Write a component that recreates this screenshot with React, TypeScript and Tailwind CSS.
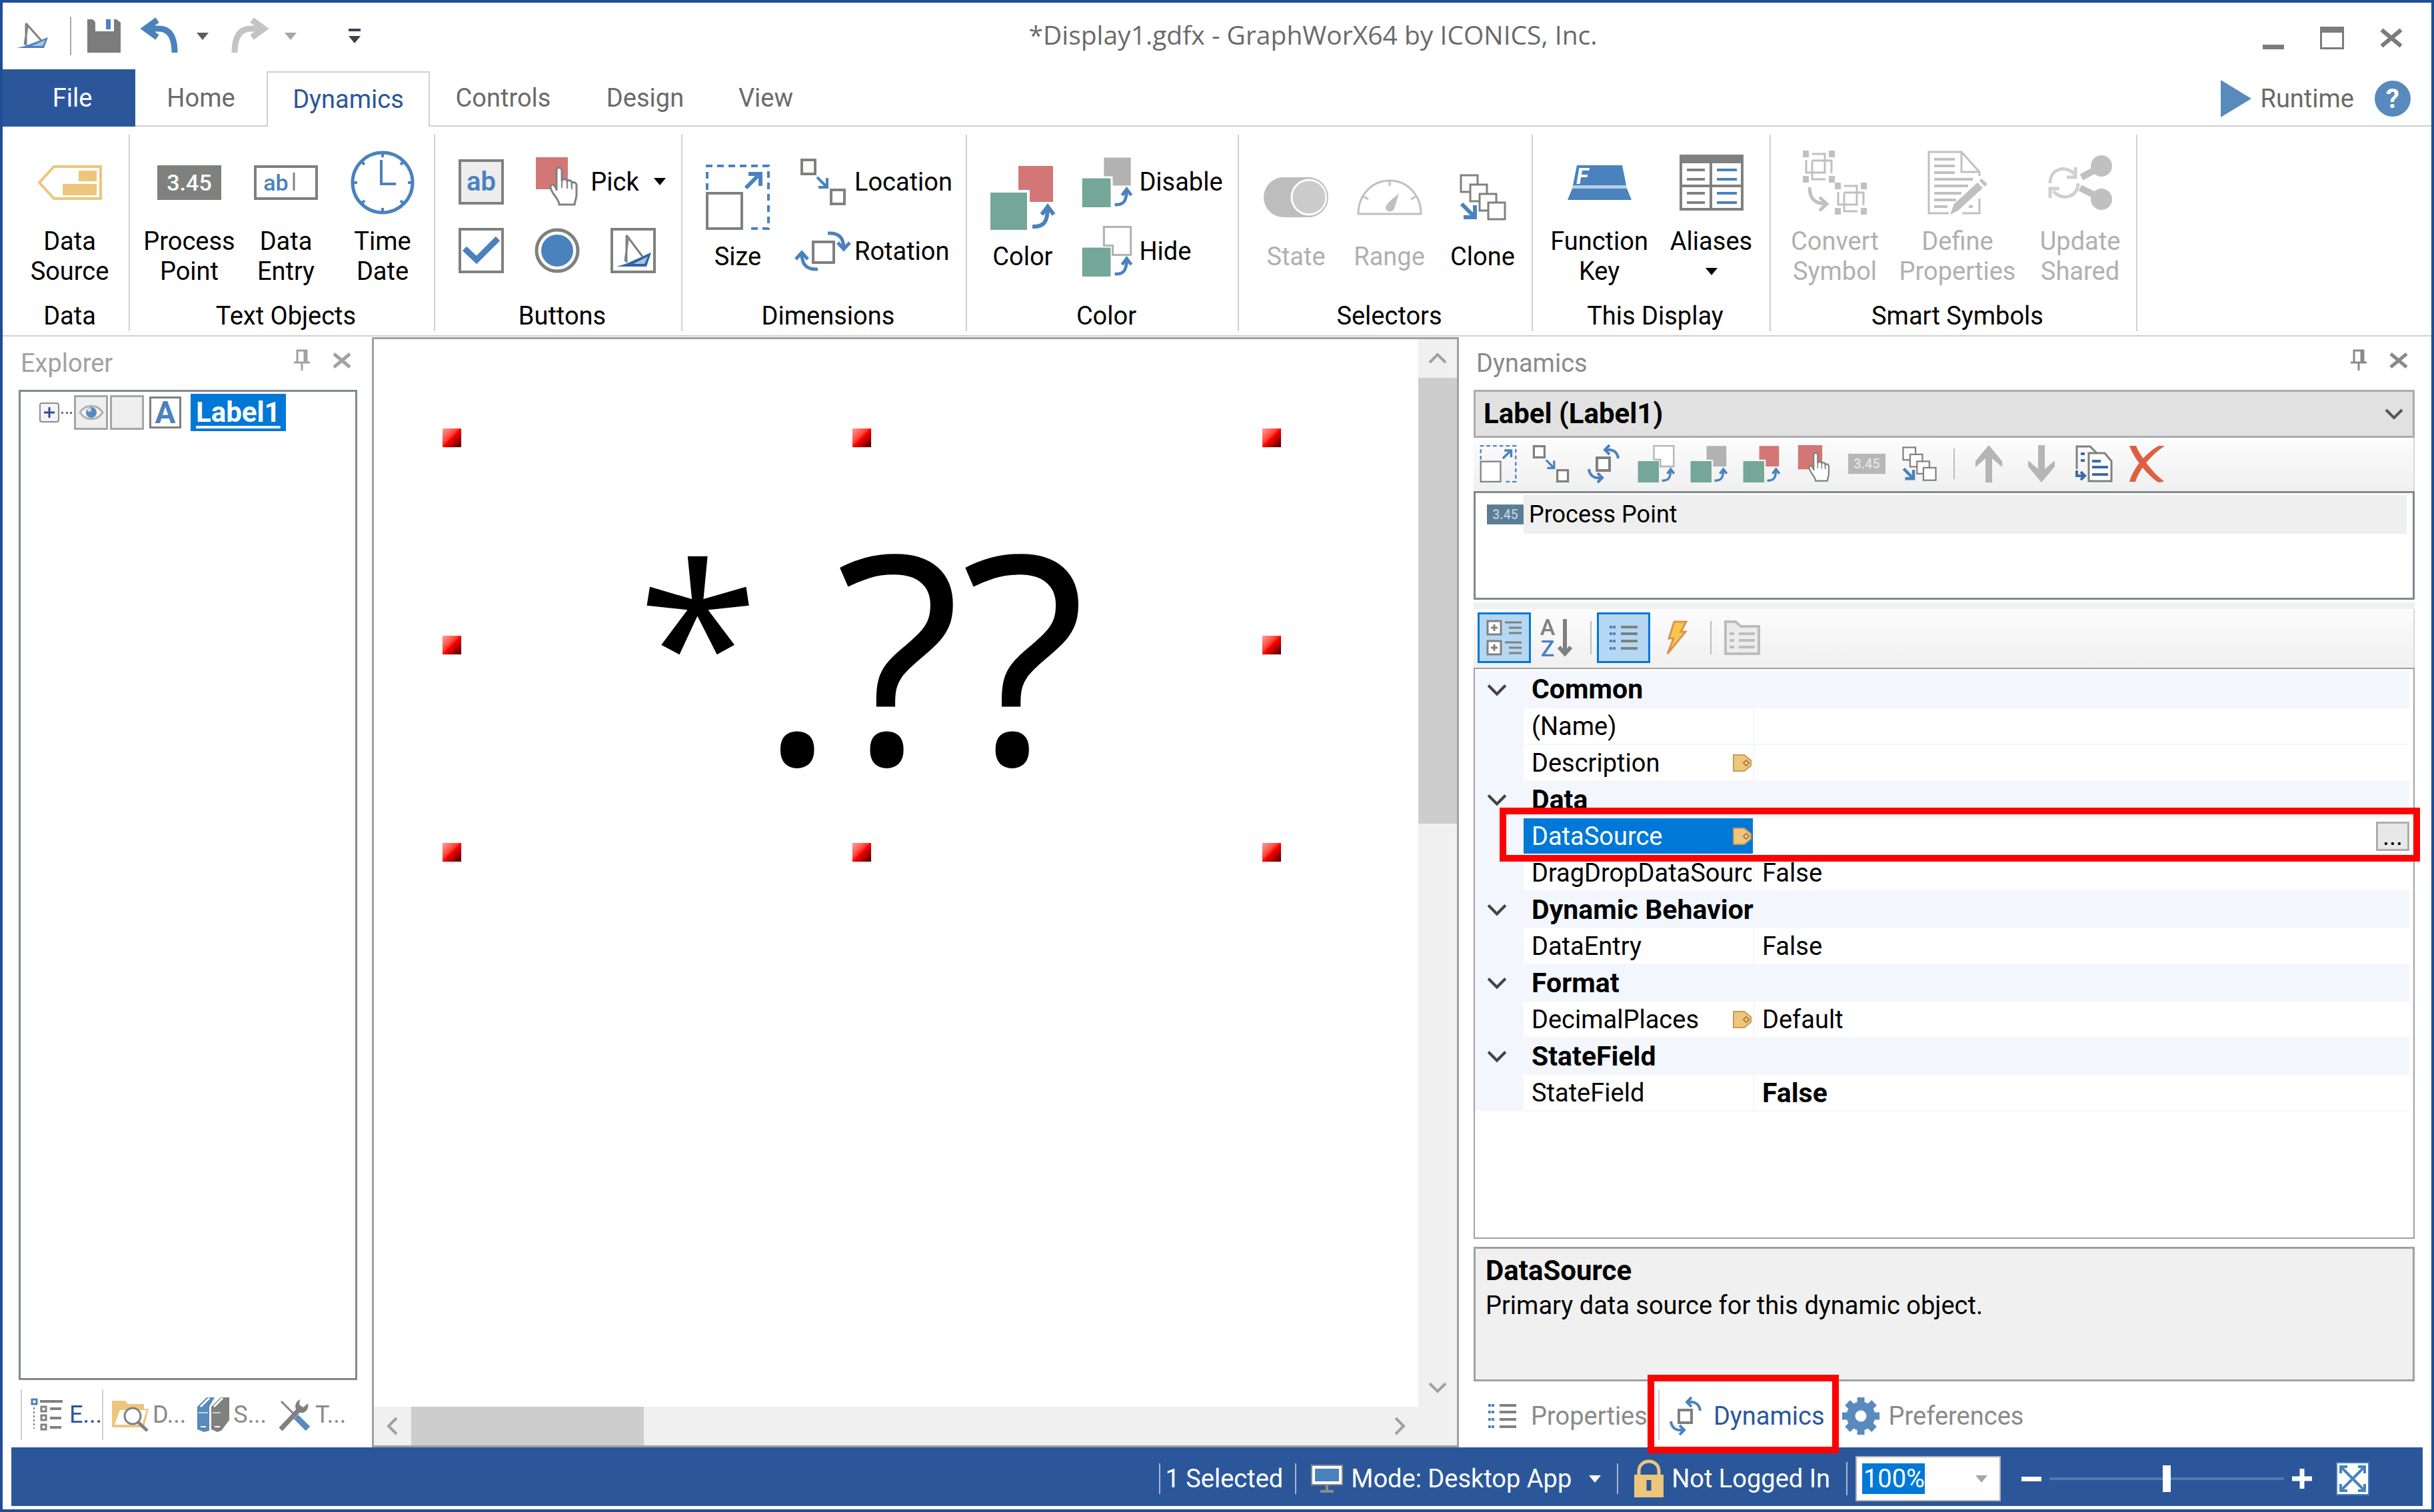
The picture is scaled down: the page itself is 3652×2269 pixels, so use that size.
import React from 'react';

const BLUE = '#4a82bd';
const GRAY = '#7f817f';
const GREEN = '#74a797';
const RED = '#d27676';
const MUTED = '#c0c0c0';

interface IconProps {
  readonly className?: string;
}

interface SvgProps extends IconProps {
  readonly box: string;
  readonly children: React.ReactNode;
}

function Svg({ box, className, children }: SvgProps) {
  return (
    <svg viewBox={box} className={`shrink-0 overflow-visible ${className ?? ''}`} fill="none" aria-hidden="true">
      {children}
    </svg>
  );
}

/* ---------- small glyphs ---------- */

function Caret({ className = 'w-[18px] h-[11px] text-black' }: IconProps) {
  return (
    <Svg box="0 0 18 11" className={className}>
      <path d="M0 0H18L9 11Z" fill="currentColor" />
    </Svg>
  );
}

function Chevron({ className = '' }: IconProps) {
  return (
    <Svg box="0 0 28 18" className={className}>
      <path d="M2 3L14 15L26 3" stroke="currentColor" strokeWidth="4" />
    </Svg>
  );
}

function PinIcon() {
  return (
    <Svg box="0 0 24 32" className="w-[24px] h-[32px]">
      <path d="M5 2H19V20H5ZM16 2V20M0 20H24M12 20V32" stroke="currentColor" strokeWidth="3" />
    </Svg>
  );
}

function CloseIcon({ className = 'w-[28px] h-[22px]' }: IconProps) {
  return (
    <Svg box="0 0 28 22" className={className}>
      <path d="M2 1L26 21M26 1L2 21" stroke="currentColor" strokeWidth="5" />
    </Svg>
  );
}

function SailIcon({ className = 'w-[48px] h-[42px]' }: IconProps) {
  return (
    <Svg box="0 0 48 42" className={className}>
      <path d="M0 39C12 37 26 31 47 23L41 39Z" fill={BLUE} />
      <path d="M22 36L43 27L39 36Z" fill="#a9c4e0" />
      <path d="M14 2V35M14 2L37 28M16 7L12 34" stroke={GRAY} strokeWidth="3" />
    </Svg>
  );
}

function SaveIcon() {
  return (
    <Svg box="0 0 50 50" className="w-[50px] h-[50px]">
      <path d="M0 0H8L12 4V18H40V0H44L50 5V50H0Z" fill="#7c7c7c" />
      <rect x="28" y="0" width="7" height="15" fill={BLUE} />
    </Svg>
  );
}

function UndoIcon({ className }: IconProps) {
  return (
    <Svg box="0 0 54 50" className={className}>
      <path d="M22 1L4 14L22 27M4 14H24C40 14 48 26 48 50" stroke="currentColor" strokeWidth="9" />
    </Svg>
  );
}

function HelpIcon() {
  return (
    <Svg box="0 0 56 56" className="w-[56px] h-[56px]">
      <circle cx="28" cy="28" r="27" fill="#588abd" />
      <text x="28" y="42" textAnchor="middle" fontSize="40" fontWeight="700" fill="#fff">?</text>
    </Svg>
  );
}

/* ---------- ribbon icons ---------- */

function TagIcon() {
  return (
    <Svg box="0 0 96 52" className="w-[96px] h-[52px]">
      <path d="M24 2H94V50H24L2 26Z" stroke="#edc67c" strokeWidth="4" />
      <path d="M61 8H88V24H61ZM37 28H88V45H37Z" fill="#edc67c" />
    </Svg>
  );
}

interface ValueIconProps extends IconProps {
  readonly fill?: string;
  readonly ink?: string;
}

function ValueIcon({ className = 'w-[96px] h-[52px]', fill = GRAY, ink = '#fff' }: ValueIconProps) {
  return (
    <Svg box="0 0 96 52" className={className}>
      <rect width="96" height="52" fill={fill} />
      <text x="48" y="38" textAnchor="middle" fontSize="34" fontWeight="500" fill={ink}>3.45</text>
    </Svg>
  );
}

function EntryIcon() {
  return (
    <Svg box="0 0 96 52" className="w-[96px] h-[52px]">
      <rect x="2" y="2" width="92" height="48" fill="#fff" stroke={GRAY} strokeWidth="4" />
      <text x="33" y="38" textAnchor="middle" fontSize="34" fontWeight="500" fill={BLUE}>ab</text>
      <path d="M60 11V38" stroke={GRAY} strokeWidth="3" />
    </Svg>
  );
}

function ClockIcon() {
  return (
    <Svg box="0 0 96 96" className="w-[96px] h-[96px]">
      <circle cx="48" cy="48" r="45" stroke={BLUE} strokeWidth="5" />
      <path d="M46 14V50H68" stroke={BLUE} strokeWidth="4" />
      <path d="M48 3V10M48 86V93M3 48H10M86 48H93M16 16L21 21M75 21L80 16M16 80L21 75M75 75L80 80" stroke={BLUE} strokeWidth="4" />
    </Svg>
  );
}

function PushIcon() {
  return (
    <Svg box="0 0 68 68" className="w-[68px] h-[68px]">
      <rect x="2" y="2" width="64" height="64" fill="#ededed" stroke={GRAY} strokeWidth="4" />
      <text x="34" y="47" textAnchor="middle" fontSize="40" fontWeight="600" fill={BLUE}>ab</text>
    </Svg>
  );
}

function PickIcon({ className = 'w-[64px] h-[74px]' }: IconProps) {
  return (
    <Svg box="0 0 64 74" className={className}>
      <rect width="48" height="48" fill={RED} />
      <path
        d="M31 50V20C31 14 39 14 39 20V36C40 31 47 32 47 37C48 33 54 34 54 39C56 36 61 38 61 42V56C61 62 59 64 58 71H35C35 62 22 54 22 44C22 39 28 40 31 48"
        fill="#fff"
        stroke={GRAY}
        strokeWidth="3"
      />
      <path d="M39 35V46M47 37V47M54 39V48" stroke={GRAY} strokeWidth="2" />
    </Svg>
  );
}

function CheckIcon() {
  return (
    <Svg box="0 0 68 68" className="w-[68px] h-[68px]">
      <rect x="2" y="2" width="64" height="64" fill="#fff" stroke={GRAY} strokeWidth="4" />
      <path d="M9 31L27 48L59 16" stroke={BLUE} strokeWidth="9" />
    </Svg>
  );
}

function RadioIcon() {
  return (
    <Svg box="0 0 68 68" className="w-[68px] h-[68px]">
      <circle cx="34" cy="34" r="31" fill="#fff" stroke={GRAY} strokeWidth="5" />
      <circle cx="34" cy="34" r="24" fill={BLUE} />
    </Svg>
  );
}

function SailButtonIcon() {
  return (
    <Svg box="0 0 68 68" className="w-[68px] h-[68px]">
      <rect x="2" y="2" width="64" height="64" fill="#fff" stroke={GRAY} strokeWidth="4" />
      <path d="M9 58C24 55 40 46 61 37L54 58Z" fill="#2f63a8" />
      <path d="M34 54L56 43L51 54Z" fill="#a9c4e0" />
      <path d="M24 11V52M24 11L48 43M26 17L22 50" stroke={GRAY} strokeWidth="3" />
    </Svg>
  );
}

function SizeIcon({ className = 'w-[96px] h-[98px]' }: IconProps) {
  return (
    <Svg box="0 0 96 98" className={className}>
      <path d="M2 38V2H94V96H62" stroke={BLUE} strokeWidth="4" strokeDasharray="10 7" />
      <rect x="2" y="43" width="52" height="53" fill="#fff" stroke={GRAY} strokeWidth="4" />
      <path d="M60 35L78 17M64 14H82V32" stroke={BLUE} strokeWidth="6" />
    </Svg>
  );
}

function LocationIcon({ className = 'w-[68px] h-[70px]' }: IconProps) {
  return (
    <Svg box="0 0 68 70" className={className}>
      <path d="M2 2H22V23H2ZM46 47H66V68H46Z" fill="#fff" stroke={GRAY} strokeWidth="4" />
      <path d="M25 28L38 41M40 29V43H27" stroke={BLUE} strokeWidth="4" />
    </Svg>
  );
}

function RotationIcon({ className = 'w-[84px] h-[60px]' }: IconProps) {
  return (
    <Svg box="0 0 84 60" className={className}>
      <rect x="27" y="16" width="31" height="31" fill="#fff" stroke={GRAY} strokeWidth="4" />
      <path d="M49 3C66 2 73 10 73 26M64 17L73 27L82 17" stroke={BLUE} strokeWidth="5" />
      <path d="M34 57C17 58 10 50 10 33M1 42L10 32L19 42" stroke={BLUE} strokeWidth="5" />
    </Svg>
  );
}

// Same rotation glyph as in the toolbars and the tab strip
function RotateIcon({ className = 'w-[56px] h-[56px]' }: IconProps) {
  return (
    <Svg box="0 0 56 56" className={className}>
      <rect x="18" y="19" width="19" height="19" fill="#fff" stroke={GRAY} strokeWidth="4" />
      <path d="M30 7C44 5 49 12 50 20M37 0L30 7L37 14" stroke={BLUE} strokeWidth="4" />
      <path d="M26 49C12 51 7 44 6 36M19 42L26 49L19 56" stroke={BLUE} strokeWidth="4" />
    </Svg>
  );
}

interface SwapIconProps extends IconProps {
  readonly fill: string;
  readonly line?: string;
}

function SwapIcon({ fill, line = 'none', className = 'w-[96px] h-[98px]' }: SwapIconProps) {
  return (
    <Svg box="0 0 96 98" className={className}>
      <path d="M42 2H94V56H59V38H42Z" fill={fill} stroke={line} strokeWidth="4" />
      <rect x="0" y="42" width="55" height="56" fill={GREEN} />
      <path d="M63 93C80 94 86 86 86 64M77 75L86 63L95 75" stroke={BLUE} strokeWidth="6" />
    </Svg>
  );
}

function StateIcon() {
  return (
    <Svg box="0 0 98 60" className="w-[98px] h-[60px]">
      <rect width="96" height="60" rx="30" fill="#bdbdbd" />
      <circle cx="68" cy="30" r="26" fill="#cbcbcb" stroke="#fff" strokeWidth="3" />
      <circle cx="67" cy="30" r="29" stroke="#bdbdbd" strokeWidth="2" />
    </Svg>
  );
}

function RangeIcon() {
  return (
    <Svg box="0 0 98 54" className="w-[98px] h-[54px]">
      <path d="M2 52C2 24 22 2 49 2C76 2 96 24 96 52Z" stroke={MUTED} strokeWidth="3" />
      <path d="M49 2V10M10 26L17 30M88 26L81 30" stroke={MUTED} strokeWidth="3" />
      <path d="M63 21L56 44C54 50 44 50 43 43C43 38 50 32 63 21Z" fill={MUTED} />
    </Svg>
  );
}

function CloneIcon({ className = 'w-[70px] h-[70px]' }: IconProps) {
  return (
    <Svg box="0 0 70 70" className={className}>
      <path d="M2 2H27V27H2Z" fill="#fff" stroke={GRAY} strokeWidth="3" />
      <path d="M16 16H41V41H16Z" fill="#fff" stroke={GRAY} strokeWidth="3" />
      <path d="M30 30H55V55H30Z" fill="#fff" stroke={GRAY} strokeWidth="3" />
      <path d="M43 43H68V68H43Z" fill="#fff" stroke={GRAY} strokeWidth="3" />
      <path d="M3 45L20 62M23 47V65H6" stroke={BLUE} strokeWidth="6" />
    </Svg>
  );
}

function FunctionKeyIcon() {
  return (
    <Svg box="0 0 96 52" className="w-[96px] h-[52px]">
      <path d="M14 0H82L88 30H8ZM7 35H89L96 52H0Z" fill={BLUE} />
      <path d="M8 30H88L89 35H7Z" fill="#b5cce4" />
      <text x="13" y="28" fontSize="34" fontWeight="700" fontStyle="italic" fill="#fff">F</text>
    </Svg>
  );
}

function AliasesIcon() {
  return (
    <Svg box="0 0 96 84" className="w-[96px] h-[84px]">
      <rect x="2" y="2" width="92" height="80" fill="#fff" stroke={GRAY} strokeWidth="4" />
      <path d="M0 7H96" stroke={GRAY} strokeWidth="12" />
      <path d="M47 12V82M0 47H96" stroke={GRAY} strokeWidth="4" />
      <path d="M11 23H38M11 37H38M11 58H38M11 72H38" stroke={GRAY} strokeWidth="4" />
      <path d="M56 23H86M56 37H86M56 58H86M56 72H86" stroke={BLUE} strokeWidth="4" />
    </Svg>
  );
}

function ConvertIcon() {
  const symbol = (
    <>
      <path d="M0 0H9V10H0ZM39 0H48V10H39ZM0 38H9V48H0ZM39 38H48V48H39Z" fill={MUTED} />
      <path d="M14 5H33V33H5V14M14 15H43V34M14 15V43H34" stroke={MUTED} strokeWidth="3" />
    </>
  );
  return (
    <Svg box="0 0 96 96" className="w-[96px] h-[96px]">
      {symbol}
      <g transform="translate(48 48)">{symbol}</g>
      <path d="M10 55C10 72 18 80 35 80M25 70L36 80L25 90" stroke={MUTED} strokeWidth="5" />
    </Svg>
  );
}

function DefineIcon() {
  return (
    <Svg box="0 0 90 96" className="w-[90px] h-[96px]">
      <path d="M32 94H2V2H51L78 32V38M51 2V32H78M52 94H78V72" stroke={MUTED} strokeWidth="3" />
      <path d="M10 13H41M10 23H41M10 33H41M10 43H68M10 53H61M10 64H51M10 74H43M10 84H30M62 84H68" stroke={MUTED} strokeWidth="4" />
      <path d="M34 96L40 80L75 48L83 56L46 90Z" fill={MUTED} />
      <path d="M78 45L81 42L90 50L86 54Z" fill={MUTED} />
    </Svg>
  );
}

function UpdateIcon() {
  return (
    <Svg box="0 0 96 82" className="w-[96px] h-[82px]">
      <circle cx="80" cy="16" r="16" fill={MUTED} />
      <circle cx="80" cy="66" r="16" fill={MUTED} />
      <path d="M50 33L74 20M48 49L74 62" stroke={MUTED} strokeWidth="10" />
      <path d="M3 42C3 20 26 14 39 28M41 18V33H28M45 42C45 62 22 70 8 54M3 64V50H17" stroke="#d0d0d0" strokeWidth="5" />
    </Svg>
  );
}

/* ---------- panel icons ---------- */

function ArrowIcon({ className }: IconProps) {
  return (
    <Svg box="0 0 56 56" className={className}>
      <path d="M28 0L48 24V33L33 20V56H23V20L8 33V24Z" fill="#b5b5b5" />
    </Svg>
  );
}

function CopyIcon() {
  return (
    <Svg box="0 0 56 56" className="w-[56px] h-[56px]">
      <path d="M2 36V2H22L32 12" stroke={GRAY} strokeWidth="3" />
      <path d="M20 54V12H44L54 24V54Z" fill="#fff" stroke={GRAY} strokeWidth="3" />
      <path d="M25 24H38M25 33H49M25 44H49M8 13H14M8 23H14M2 38V46H12M8 40L14 46L8 52" stroke="#3a6ca5" strokeWidth="4" />
    </Svg>
  );
}

function DeleteIcon() {
  return (
    <Svg box="0 0 56 56" className="w-[56px] h-[56px]">
      <path d="M2 1H12C16 12 36 42 54 54C50 56 46 56 44 55C26 42 8 18 2 1Z" fill="#dc6141" />
      <path d="M55 1C36 14 18 34 11 55H2C8 34 26 12 46 1Z" fill="#dc6141" />
    </Svg>
  );
}

function CategorizedIcon() {
  return (
    <Svg box="0 0 56 56" className="w-[56px] h-[56px]">
      <path d="M3 3H23V23H3ZM3 33H23V53H3Z" fill="#fff" stroke={GRAY} strokeWidth="3" />
      <path d="M13 8V18M8 13H18M13 38V48M8 43H18" stroke={GRAY} strokeWidth="3" />
      <path d="M29 5H54M35 13H54M35 21H54M29 35H54M35 43H54M35 51H54" stroke={GRAY} strokeWidth="3" />
    </Svg>
  );
}

function SortIcon() {
  return (
    <Svg box="0 0 50 56" className="w-[50px] h-[56px]">
      <text x="12" y="24" textAnchor="middle" fontSize="34" fontWeight="500" fill={GRAY}>A</text>
      <text x="12" y="56" textAnchor="middle" fontSize="34" fontWeight="500" fill={BLUE}>Z</text>
      <path d="M38 0V52M29 42L38 52L47 42" stroke={GRAY} strokeWidth="6" />
    </Svg>
  );
}

function ListIcon() {
  return (
    <Svg box="0 0 42 36" className="w-[42px] h-[36px]">
      <path d="M0 2H10M0 12H10M0 23H10M0 34H10" stroke={BLUE} strokeWidth="4" strokeDasharray="4 1" />
      <path d="M17 2H42M17 12H42M17 23H42M17 34H42" stroke={GRAY} strokeWidth="4" />
    </Svg>
  );
}

function BoltIcon() {
  return (
    <Svg box="0 0 32 52" className="w-[32px] h-[52px]">
      <path d="M12 2H30L22 17H29L2 50L11 27H4Z" fill="#fbc64f" stroke="#d9964e" strokeWidth="3" />
    </Svg>
  );
}

function PagesIcon() {
  return (
    <Svg box="0 0 54 52" className="w-[54px] h-[52px]">
      <path d="M2 50V2H17L25 9H52V50Z" fill="#ececec" stroke="#bdbdbd" strokeWidth="4" />
      <path d="M8 20H15M8 30H15M8 40H15M22 20H46M22 30H46M22 40H46" stroke="#bdbdbd" strokeWidth="4" />
    </Svg>
  );
}

function GearIcon() {
  return (
    <Svg box="0 0 56 56" className="w-[56px] h-[56px]">
      <circle cx="28" cy="28" r="15" stroke="#588abd" strokeWidth="13" />
      <path d="M28 8V0M28 48V56M8 28H0M48 28H56M14 14L8 8M42 14L48 8M14 42L8 48M42 42L48 48" stroke="#588abd" strokeWidth="11" />
    </Svg>
  );
}

function TreeTabIcon() {
  return (
    <Svg box="0 0 48 50" className="w-[48px] h-[50px]">
      <path d="M2 2H9V9H2Z" stroke={BLUE} strokeWidth="3" />
      <path d="M16 13H23V20H16ZM16 26H23V33H16ZM16 40H23V47H16Z" stroke={GRAY} strokeWidth="3" />
      <path d="M14 5H48M29 16H46M29 30H46M29 44H46" stroke={GRAY} strokeWidth="4" />
      <path d="M5 14V46" stroke={GRAY} strokeWidth="2" strokeDasharray="3 3" />
    </Svg>
  );
}

function FolderSearchIcon() {
  return (
    <Svg box="0 0 56 50" className="w-[56px] h-[50px]">
      <path d="M0 4H20L24 9H48V16H55L48 44H0Z" fill="#edc67c" />
      <path d="M4 40L12 18H52L45 40Z" fill="#fff" />
      <circle cx="31" cy="27" r="12" fill="#fff" stroke={GRAY} strokeWidth="3" />
      <path d="M39 36L53 49" stroke={GRAY} strokeWidth="5" />
    </Svg>
  );
}

function BooksIcon() {
  return (
    <Svg box="0 0 48 52" className="w-[48px] h-[52px]">
      <path d="M0 14L14 0H26L18 14V50L10 52L0 48Z" fill="#588abd" />
      <path d="M21 14L35 0H48V34L36 50L30 52L21 48Z" fill={GRAY} />
      <path d="M5 14L18 1M25 14L38 1" stroke="#fff" strokeWidth="3" />
      <path d="M2 23H16M23 23H35" stroke="#c4d4e4" strokeWidth="2" />
      <path d="M5 44H13M26 44H34" stroke="#fff" strokeWidth="2" />
    </Svg>
  );
}

function ToolsIcon() {
  return (
    <Svg box="0 0 50 50" className="w-[50px] h-[50px]">
      <path d="M5 5L26 26" stroke={GRAY} strokeWidth="3" />
      <path d="M27 28L45 46" stroke="#588abd" strokeWidth="9" />
      <path d="M4 47L32 17" stroke={GRAY} strokeWidth="7" />
      <path d="M33 2C23 7 25 20 33 22C41 24 47 16 45 8L38 14L32 10Z" fill={GRAY} />
    </Svg>
  );
}

function EyeIcon() {
  return (
    <Svg box="0 0 38 24" className="w-[38px] h-[24px]">
      <path d="M2 12C10 -1 28 -1 36 12C28 25 10 25 2 12Z" fill="#f4f4f4" stroke="#b0b0b0" strokeWidth="3" />
      <circle cx="19" cy="12" r="8" fill="#588abd" />
      <circle cx="16" cy="8" r="3" fill="#cfe0f0" />
    </Svg>
  );
}

function BindIcon() {
  return (
    <Svg box="0 0 28 26" className="w-[28px] h-[26px]">
      <path d="M1 1H17L27 9V17L17 25H1Z" fill="#f0c67c" stroke="#c99a55" strokeWidth="2" />
      <path d="M20 9L16 13L20 17L24 13Z" fill="#f7dda8" stroke="#a9803f" strokeWidth="2" />
    </Svg>
  );
}

function MonitorIcon() {
  return (
    <Svg box="0 0 48 42" className="w-[48px] h-[42px]">
      <path d="M24 30V40M14 40H34" stroke="#8f8c86" strokeWidth="4" />
      <rect x="1" y="1" width="46" height="29" fill="#fff" stroke="#8f8c86" strokeWidth="2" />
      <rect x="6" y="6" width="36" height="19" fill={BLUE} />
    </Svg>
  );
}

function LockIcon() {
  return (
    <Svg box="0 0 44 56" className="w-[44px] h-[56px]">
      <path d="M7 26V17C7 -3 37 -3 37 17V26" stroke="#edc67c" strokeWidth="5" />
      <rect y="22" width="44" height="34" fill="#edc67c" />
      <path d="M22 30V46" stroke="#2b579a" strokeWidth="7" />
    </Svg>
  );
}

function FitIcon() {
  return (
    <Svg box="0 0 50 50" className="w-[50px] h-[50px]">
      <rect x="1" y="1" width="48" height="48" fill="#fff" stroke={BLUE} strokeWidth="2" />
      <path d="M9 9L41 41M41 9L9 41M7 17V7H17M33 7H43V17M43 33V43H33M17 43H7V33" stroke={BLUE} strokeWidth="4" />
    </Svg>
  );
}

/* ---------- ribbon ---------- */

interface RibbonButtonProps {
  readonly icon: React.ReactNode;
  readonly lines: string[];
  readonly width: string;
  readonly disabled?: boolean;
  readonly menu?: boolean;
}

function RibbonButton({ icon, lines, width, disabled, menu }: RibbonButtonProps) {
  return (
    <button
      type="button"
      disabled={disabled}
      className={`flex flex-col items-center shrink-0 leading-[45px] text-black disabled:text-[#b0b0b0] ${width}`}
    >
      <span className="flex h-[133px] items-center justify-center">{icon}</span>
      {lines.map((line) => (
        <span key={line} className="whitespace-nowrap">{line}</span>
      ))}
      {menu && <span className="flex h-[45px] items-center"><Caret /></span>}
    </button>
  );
}

interface RibbonGroupProps {
  readonly label: string;
  readonly width: string;
  readonly children: React.ReactNode;
}

function RibbonGroup({ label, width, children }: RibbonGroupProps) {
  return (
    <section className={`flex flex-col shrink-0 border-r-2 border-[#d0d0d0] pl-[12px] pt-[5px] ${width}`}>
      <div className="flex h-[223px] items-center justify-center">{children}</div>
      <h2 className="mt-[22px] text-center leading-[45px]">{label}</h2>
    </section>
  );
}

function Ribbon() {
  return (
    <div className="flex border-b-2 border-[#d0d0d0] pt-[12px] pb-[6px]">
      <RibbonGroup label="Data" width="w-[191px]">
        <RibbonButton icon={<TagIcon />} lines={['Data', 'Source']} width="w-[140px]" />
      </RibbonGroup>

      <RibbonGroup label="Text Objects" width="w-[458px]">
        <RibbonButton icon={<ValueIcon />} lines={['Process', 'Point']} width="w-[150px]" />
        <RibbonButton icon={<EntryIcon />} lines={['Data', 'Entry']} width="w-[140px]" />
        <RibbonButton icon={<ClockIcon />} lines={['Time', 'Date']} width="w-[150px]" />
      </RibbonGroup>

      <RibbonGroup label="Buttons" width="w-[371px]">
        <div className="flex flex-col gap-[32px] pt-[8px]">
          <div className="flex items-center">
            <button type="button" aria-label="Button"><PushIcon /></button>
            <button type="button" className="ml-[48px] flex items-center">
              <PickIcon />
              <span className="ml-[18px] mr-[22px]">Pick</span>
              <Caret />
            </button>
          </div>
          <div className="flex items-center gap-[46px]">
            <button type="button" aria-label="Check box"><CheckIcon /></button>
            <button type="button" aria-label="Radio button"><RadioIcon /></button>
            <button type="button" aria-label="Symbol button"><SailButtonIcon /></button>
          </div>
        </div>
      </RibbonGroup>

      <RibbonGroup label="Dimensions" width="w-[427px]">
        <RibbonButton icon={<SizeIcon />} lines={['Size']} width="w-[130px]" />
        <div className="ml-[16px] mr-[14px] flex flex-col gap-[32px] pt-[12px]">
          <button type="button" className="flex h-[72px] items-center">
            <span className="flex w-[94px] justify-center"><LocationIcon /></span>
            Location
          </button>
          <button type="button" className="flex h-[72px] items-center">
            <span className="flex w-[94px] justify-center"><RotationIcon /></span>
            Rotation
          </button>
        </div>
      </RibbonGroup>

      <RibbonGroup label="Color" width="w-[408px]">
        <RibbonButton icon={<SwapIcon fill={RED} />} lines={['Color']} width="w-[130px]" />
        <div className="ml-[24px] mr-[16px] flex flex-col gap-[28px] pt-[12px]">
          <button type="button" className="flex items-center gap-[10px]">
            <SwapIcon fill="#b2b2b2" className="w-[76px] h-[76px]" />
            Disable
          </button>
          <button type="button" className="flex items-center gap-[10px]">
            <SwapIcon fill="#fff" line="#b2b2b2" className="w-[76px] h-[76px]" />
            Hide
          </button>
        </div>
      </RibbonGroup>

      <RibbonGroup label="Selectors" width="w-[441px]">
        <RibbonButton icon={<StateIcon />} lines={['State']} width="w-[140px]" disabled />
        <RibbonButton icon={<RangeIcon />} lines={['Range']} width="w-[140px]" disabled />
        <RibbonButton icon={<CloneIcon />} lines={['Clone']} width="w-[140px]" />
      </RibbonGroup>

      <RibbonGroup label="This Display" width="w-[357px]">
        <RibbonButton icon={<FunctionKeyIcon />} lines={['Function', 'Key']} width="w-[168px]" />
        <RibbonButton icon={<AliasesIcon />} lines={['Aliases']} width="w-[168px]" menu />
      </RibbonGroup>

      <RibbonGroup label="Smart Symbols" width="w-[550px]">
        <RibbonButton icon={<ConvertIcon />} lines={['Convert', 'Symbol']} width="w-[184px]" disabled />
        <RibbonButton icon={<DefineIcon />} lines={['Define', 'Properties']} width="w-[184px]" disabled />
        <RibbonButton icon={<UpdateIcon />} lines={['Update', 'Shared']} width="w-[184px]" disabled />
      </RibbonGroup>
    </div>
  );
}

/* ---------- title bar and tabs ---------- */

function TitleBar() {
  return (
    <header className="grid h-[100px] grid-cols-[1fr_auto_1fr] items-center">
      <div className="flex items-center pl-[21px]">
        <SailIcon />
        <span className="ml-[32px] h-[58px] w-[2px] bg-[#a8a8a8]" />
        <button type="button" aria-label="Save" className="ml-[24px]"><SaveIcon /></button>
        <button type="button" aria-label="Undo" className="ml-[33px]">
          <UndoIcon className="h-[50px] w-[54px] text-[#4a82bd]" />
        </button>
        <button type="button" aria-label="Undo list" className="ml-[27px]">
          <Caret className="h-[11px] w-[18px] text-[#5c5c5c]" />
        </button>
        <button type="button" aria-label="Redo" className="ml-[33px]" disabled>
          <UndoIcon className="h-[50px] w-[54px] -scale-x-100 text-[#c4c4c4]" />
        </button>
        <button type="button" aria-label="Redo list" className="ml-[27px]" disabled>
          <Caret className="h-[11px] w-[18px] text-[#a6a6a6]" />
        </button>
        <button type="button" aria-label="Customize toolbar" className="ml-[78px] flex flex-col items-center gap-[7px]">
          <span className="h-[4px] w-[18px] bg-[#3c4350]" />
          <Caret className="h-[11px] w-[18px] text-[#3c4350]" />
        </button>
      </div>
      <h1 className="pl-[288px] pb-[4px] font-['Open_Sans',sans-serif] text-[39px] text-[#6a6a6a]">
        *Display1.gdfx - GraphWorX64 by ICONICS, Inc.
      </h1>
      <div className="flex items-center justify-end gap-[54px] pr-[43px] pt-[6px] text-[#7c7c7c]">
        <button type="button" aria-label="Minimize" className="flex h-[34px] w-[32px] items-end">
          <span className="h-[7px] w-full bg-[#7c7c7c]" />
        </button>
        <button type="button" aria-label="Maximize" className="h-[34px] w-[36px] border-3 border-t-[9px] border-[#7c7c7c]" />
        <button type="button" aria-label="Close"><CloseIcon className="h-[32px] w-[34px]" /></button>
      </div>
    </header>
  );
}

const TABS = [
  { name: 'Home', width: 'w-[197px]' },
  { name: 'Dynamics', width: 'w-[245px]' },
  { name: 'Controls', width: 'w-[220px]' },
  { name: 'Design', width: 'w-[206px]' },
  { name: 'View', width: 'w-[156px]' },
];

function TabStrip() {
  return (
    <nav className="flex h-[86px] items-stretch text-[#6a6a6a]">
      <button type="button" className="w-[199px] bg-[#2b579a] pl-[10px] text-white">File</button>
      {TABS.map((tab) =>
        tab.name === 'Dynamics' ? (
          <button
            key={tab.name}
            type="button"
            className={`mt-[3px] border-2 border-b-0 border-[#d0d0d0] pb-[2px] text-[#2b579a] ${tab.width}`}
          >
            {tab.name}
          </button>
        ) : (
          <button key={tab.name} type="button" className={`border-b-2 border-[#d0d0d0] pt-[2px] ${tab.width}`}>
            {tab.name}
          </button>
        )
      )}
      <div className="flex flex-1 items-center justify-end border-b-2 border-[#d0d0d0] pr-[30px] pt-[4px]">
        <button type="button" className="flex items-center">
          <Svg box="0 0 46 56" className="mr-[14px] h-[56px] w-[46px]">
            <path d="M0 0L46 28L0 56Z" fill="#588abd" />
          </Svg>
          Runtime
        </button>
        <button type="button" aria-label="Help" className="ml-[30px]"><HelpIcon /></button>
      </div>
    </nav>
  );
}

/* ---------- explorer ---------- */

interface PanelHeaderProps {
  readonly title: string;
  readonly className?: string;
}

function PanelHeader({ title, className = '' }: PanelHeaderProps) {
  return (
    <div className={`flex h-[80px] shrink-0 items-center ${className}`}>
      <h2 className="flex-1">{title}</h2>
      <button type="button" aria-label={`Pin ${title}`} className="mr-[34px] pb-[10px]"><PinIcon /></button>
      <button type="button" aria-label={`Close ${title}`} className="pb-[8px]"><CloseIcon /></button>
    </div>
  );
}

function Explorer() {
  return (
    <aside className="flex w-[554px] shrink-0 flex-col">
      <PanelHeader title="Explorer" className="pl-[27px] pr-[31px] text-[#a2a2a2]" />
      <div className="ml-[24px] mr-[22px] flex-1 border-3 border-[#828790] bg-white pl-[28px] pt-[3px]">
        <div className="flex h-[56px] items-center">
          <button type="button" aria-label="Expand" className="flex size-[30px] items-center justify-center rounded-sm border-2 border-[#8c8c8c] bg-[#f4f4f4]">
            <Svg box="0 0 16 16" className="size-[16px]">
              <path d="M8 0V16M0 8H16" stroke="#2e4a9a" strokeWidth="3" />
            </Svg>
          </button>
          <span className="mx-[3px] w-[16px] border-t-3 border-dotted border-[#707070]" />
          <button type="button" aria-label="Visible" className="flex h-[52px] w-[51px] items-center justify-center border-3 border-[#a6a6a6] bg-[#efefef]">
            <EyeIcon />
          </button>
          <button type="button" aria-label="Locked" className="ml-[3px] h-[52px] w-[51px] border-3 border-[#a6a6a6] bg-[#efefef]" />
          <span className="ml-[8px] flex size-[48px] items-center justify-center border-3 border-[#7f7f7f] text-[46px] font-bold text-[#4a82bd]">
            A
          </span>
          <span className="ml-[14px] flex h-[56px] items-center bg-[#0078d7] px-[8px] text-[42px] font-bold text-white underline underline-offset-6">
            Label1
          </span>
        </div>
      </div>
      <div className="mb-[11px] mt-[14px] flex h-[76px] items-center pl-[27px] text-[36px] text-[#8a8a8a]">
        <button type="button" className="flex h-full items-center gap-[10px] border-x-2 border-[#d0d0d0] pl-[13px] text-[#2b579a]">
          <TreeTabIcon />E...
        </button>
        <button type="button" className="ml-[13px] flex items-center gap-[5px]"><FolderSearchIcon />D...</button>
        <button type="button" className="ml-[17px] flex items-center gap-[6px]"><BooksIcon />S...</button>
        <button type="button" className="ml-[17px] flex items-center gap-[6px]"><ToolsIcon />T...</button>
      </div>
    </aside>
  );
}

/* ---------- drawing canvas ---------- */

const HANDLES = [
  'left-0 top-0',
  'left-1/2 top-0',
  'left-full top-0',
  'left-0 top-1/2',
  'left-full top-1/2',
  'left-0 top-full',
  'left-1/2 top-full',
  'left-full top-full',
];

function Canvas() {
  return (
    <main className="mt-[1px] flex min-w-0 flex-1 flex-col border-3 border-[#a0a0a0] bg-white text-[#a0a0a0]">
      <div className="flex min-h-0 flex-1">
        <div className="relative flex-1 overflow-hidden">
          <div className="absolute left-[117px] top-[148px] flex h-[622px] w-[1230px] items-center justify-center">
            <p className="pt-[20px] font-['Open_Sans',sans-serif] text-[436px] leading-[436px] text-black">
              <span className="align-[60px] text-[332px] leading-none">*</span>.??
            </p>
            {HANDLES.map((place) => (
              <span
                key={place}
                className={`absolute size-[28px] -translate-1/2 bg-linear-to-br from-[#ff9c9c] via-[#ff0000] to-[#4a0000] shadow ${place}`}
              />
            ))}
          </div>
        </div>
        <div className="flex w-[58px] flex-col items-center bg-[#f0f0f0]">
          <button type="button" aria-label="Scroll up" className="flex h-[58px] items-center">
            <Chevron className="h-[18px] w-[28px] rotate-180" />
          </button>
          <div className="flex w-full flex-1 flex-col">
            <div className="h-[45%] bg-[#cdcdcd]" />
          </div>
          <button type="button" aria-label="Scroll down" className="flex h-[58px] items-center">
            <Chevron className="h-[18px] w-[28px]" />
          </button>
        </div>
      </div>
      <div className="flex h-[58px] items-center bg-[#f0f0f0] pr-[58px]">
        <button type="button" aria-label="Scroll left" className="flex w-[56px] justify-center">
          <Chevron className="h-[18px] w-[28px] rotate-90" />
        </button>
        <div className="h-full flex-1">
          <div className="h-full w-[24%] bg-[#cdcdcd]" />
        </div>
        <button type="button" aria-label="Scroll right" className="flex w-[56px] justify-center">
          <Chevron className="h-[18px] w-[28px] -rotate-90" />
        </button>
      </div>
    </main>
  );
}

/* ---------- dynamics panel ---------- */

const TOOLBAR = [
  { label: 'Size', icon: <SizeIcon className="size-[56px]" /> },
  { label: 'Location', icon: <LocationIcon className="size-[56px]" /> },
  { label: 'Rotation', icon: <RotateIcon /> },
  { label: 'Hide', icon: <SwapIcon fill="#fff" line="#b2b2b2" className="size-[56px]" /> },
  { label: 'Disable', icon: <SwapIcon fill="#b2b2b2" className="size-[56px]" /> },
  { label: 'Color', icon: <SwapIcon fill={RED} className="size-[56px]" /> },
  { label: 'Pick', icon: <PickIcon className="size-[56px]" /> },
  { label: 'Process Point', icon: <ValueIcon className="h-[34px] w-[56px]" fill="#b8b8b8" ink="#e4e4e4" /> },
  { label: 'Clone', icon: <CloneIcon className="size-[52px]" /> },
];

interface Property {
  name: string;
  value?: string;
  bind?: boolean;
  selected?: boolean;
  bold?: boolean;
}

const CATEGORIES: { title: string; rows: Property[] }[] = [
  { title: 'Common', rows: [{ name: '(Name)' }, { name: 'Description', bind: true }] },
  {
    title: 'Data',
    rows: [
      { name: 'DataSource', bind: true, selected: true },
      { name: 'DragDropDataSource', value: 'False' },
    ],
  },
  { title: 'Dynamic Behavior', rows: [{ name: 'DataEntry', value: 'False' }] },
  { title: 'Format', rows: [{ name: 'DecimalPlaces', value: 'Default', bind: true }] },
  { title: 'StateField', rows: [{ name: 'StateField', value: 'False', bold: true }] },
];

function PropertyGrid() {
  return (
    <div className="relative flex-1 border-2 border-[#a0a0a0] bg-white pr-[6px] pt-[3px]">
      <table className="w-full table-fixed border-collapse text-left leading-[50px]">
        <colgroup>
          <col className="w-[73px]" />
          <col className="w-[345px]" />
          <col />
        </colgroup>
        {CATEGORIES.map((category) => (
          <tbody key={category.title}>
            <tr className="h-[55px] bg-[#f3f6fc]">
              <td className="p-0">
                <button type="button" aria-label={`Collapse ${category.title}`} className="ml-[18px] block">
                  <Chevron className="h-[20px] w-[30px] text-[#444]" />
                </button>
              </td>
              <th colSpan={2} className="p-0 pl-[12px] text-[41px] font-bold">{category.title}</th>
            </tr>
            {category.rows.map((row) => (
              <tr key={row.name} className="h-[55px]">
                <td className="bg-[#f3f6fc] p-0" />
                <td className={`border-2 border-l-0 border-[#f3f6fc] p-0 pl-[12px] ${row.selected ? 'bg-[#0078d7] text-white' : ''}`}>
                  <div className="flex items-center justify-between overflow-hidden pr-[2px]">
                    <span className="overflow-hidden whitespace-nowrap">{row.name}</span>
                    {row.bind && <BindIcon />}
                  </div>
                </td>
                <td className={`border-2 border-r-0 border-[#f3f6fc] p-0 pl-[12px] ${row.bold ? 'text-[41px] font-bold' : ''}`}>
                  {row.selected ? (
                    <div className="flex justify-end">
                      <button type="button" className="h-[44px] w-[50px] border-3 border-[#adadad] bg-[#e8e8e8] leading-[36px]">
                        ...
                      </button>
                    </div>
                  ) : (
                    row.value
                  )}
                </td>
              </tr>
            ))}
          </tbody>
        ))}
      </table>
      <div className="pointer-events-none absolute -right-[10px] left-[37px] top-[208px] h-[81px] border-10 border-[#ff0000]" />
    </div>
  );
}

function DynamicsPanel() {
  return (
    <aside className="flex w-[1459px] shrink-0 flex-col pl-[22px] pr-[25px]">
      <PanelHeader title="Dynamics" className="pl-[4px] pr-[10px] text-[#8a8a8a]" />
      <div className="relative h-[72px] border-3 border-[#acacac] bg-[#e1e1e1]">
        <select aria-label="Selected object" className="h-full w-full appearance-none pl-[12px] text-[42px] font-bold">
          <option>Label (Label1)</option>
        </select>
        <Chevron className="pointer-events-none absolute right-[14px] top-[24px] h-[18px] w-[28px] text-[#555]" />
      </div>

      <div className="flex h-[80px] items-center gap-[23px] border-r-2 border-[#d8d8d8] bg-linear-to-b from-[#fcfcfc] to-[#f0f0f0] pb-[3px] pl-[9px]">
        {TOOLBAR.map((tool) => (
          <button key={tool.label} type="button" aria-label={tool.label} className="flex w-[56px] justify-center">
            {tool.icon}
          </button>
        ))}
        <span className="h-[46px] w-[2px] bg-[#bdbdbd]" />
        <button type="button" aria-label="Move up"><ArrowIcon className="size-[56px]" /></button>
        <button type="button" aria-label="Move down"><ArrowIcon className="size-[56px] rotate-180" /></button>
        <button type="button" aria-label="Copy"><CopyIcon /></button>
        <button type="button" aria-label="Delete"><DeleteIcon /></button>
      </div>

      <ul className="h-[163px] border-3 border-[#828790] bg-white py-[3px] pl-[17px] pr-[9px]">
        <li className="flex h-[58px] items-center">
          <ValueIcon className="h-[34px] w-[55px]" fill="#5c7c95" ink="#b9cddc" />
          <span className="flex h-full flex-1 items-center bg-[#efefef] pl-[8px] text-[36px]">Process Point</span>
        </li>
      </ul>

      <div className="mt-[4px] h-[10px] bg-[#f0f0f0]" />
      <div className="flex h-[88px] items-center border-r-2 border-[#d8d8d8] bg-linear-to-b from-[#fcfcfc] to-[#f0f0f0] pb-[3px] pl-[6px]">
        <button type="button" aria-label="Categorized" className="flex h-[76px] w-[80px] items-center justify-center border-3 border-[#0078d7] bg-[#b5d7f3]">
          <CategorizedIcon />
        </button>
        <button type="button" aria-label="Alphabetical" className="ml-[13px]"><SortIcon /></button>
        <span className="ml-[26px] h-[50px] w-[2px] bg-[#bdbdbd]" />
        <button type="button" aria-label="Properties" className="ml-[8px] flex h-[76px] w-[80px] items-center justify-center border-3 border-[#0078d7] bg-[#b5d7f3]">
          <ListIcon />
        </button>
        <button type="button" aria-label="Events" className="ml-[24px]"><BoltIcon /></button>
        <span className="ml-[34px] h-[50px] w-[2px] bg-[#bdbdbd]" />
        <button type="button" aria-label="Property pages" className="ml-[19px]"><PagesIcon /></button>
      </div>

      <PropertyGrid />

      <div className="mt-[12px] h-[202px] border-3 border-[#a0a0a0] bg-[#f0f0f0] pl-[15px] pt-[7px] leading-[52px]">
        <h3 className="text-[42px] font-bold">DataSource</h3>
        <p>Primary data source for this dynamic object.</p>
      </div>

      <div className="mb-[11px] mt-[12px] flex h-[76px] items-center text-[#8a8a8a]">
        <button type="button" className="flex items-center gap-[22px] pl-[22px] pt-[3px]"><ListIcon />Properties</button>
        <button type="button" className="relative ml-[16px] flex h-full items-center gap-[14px] border-x-2 border-[#d0d0d0] px-[11px] pt-[3px] text-[#2b579a]">
          <RotateIcon />
          Dynamics
          <span className="absolute -bottom-[20px] -left-[18px] -right-[10px] -top-[22px] border-10 border-[#ff0000]" />
        </button>
        <button type="button" className="ml-[13px] flex items-center gap-[14px] pt-[3px]"><GearIcon />Preferences</button>
      </div>
    </aside>
  );
}

/* ---------- status bar ---------- */

function StatusBar() {
  return (
    <footer className="mb-[5px] ml-[13px] mr-[13px] flex h-[88px] items-center justify-end bg-[#2b579a] pr-[80px] pt-[6px] text-white">
      <span className="border-x-2 border-[#a9b6cc] pl-[7px] pr-[18px]">1 Selected</span>
      <button type="button" className="flex items-center border-r-2 border-[#a9b6cc] pl-[22px] pr-[24px]">
        <MonitorIcon />
        <span className="ml-[12px] mr-[26px]">Mode: Desktop App</span>
        <Caret className="h-[11px] w-[18px] text-white" />
      </button>
      <button type="button" className="flex items-center gap-[12px] pl-[24px] pr-[24px]"><LockIcon />Not Logged In</button>
      <span className="h-[50px] w-[2px] bg-[#a9b6cc]" />
      <div className="ml-[12px] flex h-[68px] w-[218px] items-center justify-between border-2 border-[#b5b0a8] bg-white pl-[8px] pr-[18px]">
        <select aria-label="Zoom" className="h-[46px] w-[94px] appearance-none bg-[#0078d7] pl-[2px] leading-[46px] text-white">
          <option>100%</option>
        </select>
        <Caret className="h-[11px] w-[18px] text-[#a6a6a6]" />
      </div>
      <button type="button" aria-label="Zoom out" className="ml-[31px] h-[7px] w-[30px] bg-white" />
      <input
        type="range"
        aria-label="Zoom level"
        defaultValue={50}
        className="mx-[12px] h-[40px] w-[352px] appearance-none bg-transparent [&::-webkit-slider-runnable-track]:h-[4px] [&::-webkit-slider-runnable-track]:bg-[#5478ae] [&::-webkit-slider-thumb]:-mt-[18px] [&::-webkit-slider-thumb]:h-[40px] [&::-webkit-slider-thumb]:w-[12px] [&::-webkit-slider-thumb]:appearance-none [&::-webkit-slider-thumb]:bg-white"
      />
      <button type="button" aria-label="Zoom in">
        <Svg box="0 0 30 30" className="size-[30px]">
          <path d="M15 0V30M0 15H30" stroke="#fff" strokeWidth="7" />
        </Svg>
      </button>
      <button type="button" aria-label="Fit to window" className="ml-[36px]"><FitIcon /></button>
    </footer>
  );
}

export default function App() {
  return (
    <div className="flex h-screen flex-col overflow-hidden border-4 border-[#1f4e96] bg-white font-[Roboto,'Open_Sans',sans-serif] text-[38px] leading-[46px] text-black">
      <TitleBar />
      <TabStrip />
      <Ribbon />
      <div className="flex min-h-0 flex-1">
        <Explorer />
        <Canvas />
        <DynamicsPanel />
      </div>
      <StatusBar />
    </div>
  );
}
